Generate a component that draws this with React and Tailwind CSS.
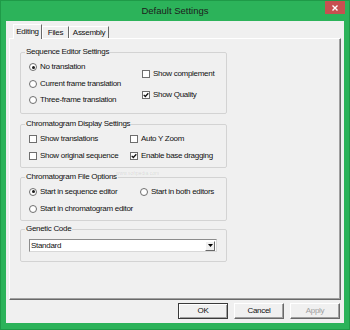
import React from "react";

const font = { fontFamily: '"Liberation Sans", Arial, sans-serif' };

function Radio({ checked, label }) {
  return (
    <div className="flex items-center gap-[3px] h-full">
      <span className="w-[8px] h-[8px] rounded-full border border-[#6e6e6e] bg-white flex items-center justify-center shrink-0">
        {checked && <span className="w-[3px] h-[3px] rounded-full bg-[#1a1a1a]" />}
      </span>
      <span className="whitespace-nowrap">{label}</span>
    </div>
  );
}

function Check({ checked, label }) {
  return (
    <div className="flex items-center gap-[3px] h-full">
      <span className="w-[8px] h-[8px] border border-[#6e6e6e] bg-white flex items-center justify-center shrink-0">
        {checked && (
          <svg width="6" height="6" viewBox="0 0 6 6">
            <path d="M0.7 2.9 L2.3 4.5 L5.3 1.2" fill="none" stroke="#111" strokeWidth="1.3" />
          </svg>
        )}
      </span>
      <span className="whitespace-nowrap">{label}</span>
    </div>
  );
}

function Group({ title, className, children }) {
  return (
    <fieldset className={`w-[207px] border border-[#d3d3d3] rounded-[2px] ${className}`}>
      <legend className="ml-[4px] px-[1px] leading-[10px]">{title}</legend>
      {children}
    </fieldset>
  );
}

export default function App() {
  return (
    <div
      className="w-[350px] h-[330px] bg-[#2cb35a] border border-[#1f9a48] flex flex-col text-[8px] tracking-[-0.3px] text-[#111]"
      style={font}
    >
      {/* Title bar */}
      <div className="h-[20px] flex items-center justify-center relative">
        <span className="text-[9.5px] tracking-normal text-[#1c1c1c]">Default Settings</span>
        <div className="absolute right-[4px] top-0 w-[20px] h-[13px] bg-[#c75050] flex items-center justify-center">
          <svg width="6" height="6" viewBox="0 0 6 6">
            <path d="M0.5 0.5 L5.5 5.5 M5.5 0.5 L0.5 5.5" stroke="#fff" strokeWidth="1.4" />
          </svg>
        </div>
      </div>

      {/* Dialog body */}
      <div className="mx-[5px] h-[302px] bg-[#f0f0f0] flex flex-col">
        {/* Tabs */}
        <div className="flex items-end pl-[7px] h-[17px]">
          <div className="relative z-10 -mb-[1px] w-[29px] h-[15px] bg-[#f0f0f0] border-t border-l border-white border-r border-r-[#696969] flex items-center justify-center pb-[1px]">
            Editing
          </div>
          <div className="w-[27px] h-[12px] border-t border-l border-white border-r border-r-[#696969] flex items-center justify-center">
            Files
          </div>
          <div className="w-[40px] h-[12px] border-t border-l border-white border-r border-r-[#696969] flex items-center justify-center">
            Assembly
          </div>
        </div>

        {/* Tab panel */}
        <div className="relative mx-[3px] h-[262px] border border-t-white border-l-white border-r-[#696969] border-b-[#696969] shadow-[inset_-1px_-1px_0_#a0a0a0] pl-[10px] pt-[8px] flex flex-col">
          {/* Sequence editor */}
          <Group title="Sequence Editor Settings" className="h-[67px]">
            <div className="flex">
              <div className="w-[121px] pl-[8px] pt-[2px] flex flex-col">
                <div className="h-[16.5px]"><Radio checked label="No translation" /></div>
                <div className="h-[16.5px]"><Radio label="Current frame translation" /></div>
                <div className="h-[16.5px]"><Radio label="Three-frame translation" /></div>
              </div>
              <div className="pt-[9px] flex flex-col gap-[5px]">
                <div className="h-[16px]"><Check label="Show complement" /></div>
                <div className="h-[16px]"><Check checked label="Show Quality" /></div>
              </div>
            </div>
          </Group>

          {/* Chromatogram display */}
          <Group title="Chromatogram Display Settings" className="h-[49px] mt-[5px]">
            <div className="flex">
              <div className="w-[109px] pl-[8px] pt-[1px] flex flex-col">
                <div className="h-[17px]"><Check label="Show translations" /></div>
                <div className="h-[17px]"><Check label="Show original sequence" /></div>
              </div>
              <div className="pt-[1px] flex flex-col">
                <div className="h-[17px]"><Check label="Auto Y Zoom" /></div>
                <div className="h-[17px]"><Check checked label="Enable base dragging" /></div>
              </div>
            </div>
          </Group>

          {/* File options */}
          <Group title="Chromatogram File Options" className="h-[49px] mt-[4px]">
            <div className="flex">
              <div className="w-[119px] pl-[8px] pt-[1px] flex flex-col">
                <div className="h-[17px]"><Radio checked label="Start in sequence editor" /></div>
                <div className="h-[17px]"><Radio label="Start in chromatogram editor" /></div>
              </div>
              <div className="pt-[1px]">
                <div className="h-[17px]"><Radio label="Start in both editors" /></div>
              </div>
            </div>
          </Group>

          {/* Genetic code */}
          <Group title="Genetic Code" className="h-[38px] mt-[3px]">
            <div className="pl-[8px] pt-[5px]">
              <div className="w-[188px] h-[13px] bg-white border border-[#8c8c8c] border-b-[#d8d8d8] border-r-[#d8d8d8] flex items-center justify-between pl-[1px]">
                <span>Standard</span>
                <span className="w-[10px] h-[10px] mr-[1px] bg-[#f0f0f0] border border-t-white border-l-white border-r-[#696969] border-b-[#696969] flex items-center justify-center">
                  <svg width="5" height="3" viewBox="0 0 5 3">
                    <path d="M0 0 H5 L2.5 3 Z" fill="#000" />
                  </svg>
                </span>
              </div>
            </div>
          </Group>

          {/* watermark */}
          <div className="absolute left-[106px] top-[131px] text-[5px] tracking-normal text-black/[0.12] pointer-events-none">
            www.softpedia.com
          </div>
        </div>

        {/* Buttons */}
        <div className="flex justify-end gap-[6px] pr-[4px] mt-[3px]">
          <button className="w-[50px] h-[16px] border border-[#3a3a3a] bg-[#f0f0f0] shadow-[inset_1px_1px_0_#fff,inset_-1px_-1px_0_#a0a0a0]">
            OK
          </button>
          <button className="w-[50px] h-[16px] bg-[#f0f0f0] border border-t-white border-l-white border-r-[#696969] border-b-[#696969] shadow-[inset_-1px_-1px_0_#a0a0a0]">
            Cancel
          </button>
          <button className="w-[50px] h-[16px] bg-[#f0f0f0] border border-t-white border-l-white border-r-[#696969] border-b-[#696969] shadow-[inset_-1px_-1px_0_#a0a0a0] text-[#a0a0a0]">
            Apply
          </button>
        </div>
      </div>
    </div>
  );
}
